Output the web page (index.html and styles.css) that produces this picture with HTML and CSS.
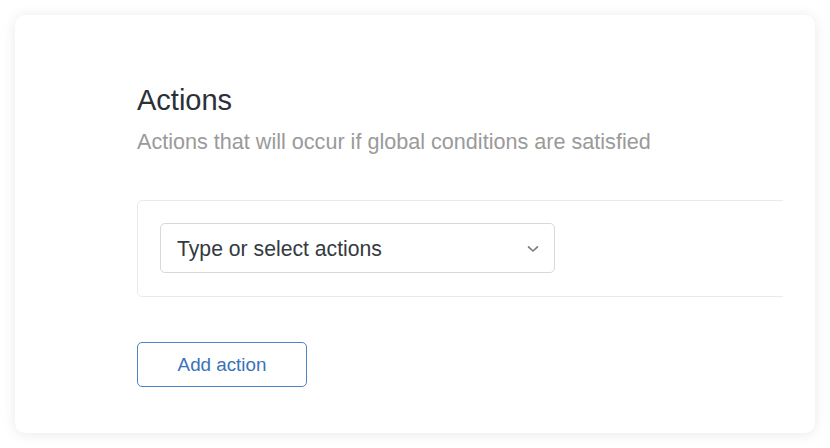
FILE: index.html
```html
<!DOCTYPE html>
<html>
<head>
<meta charset="utf-8">
<link rel="stylesheet" href="styles.css">
</head>
<body>
<div class="card">
  <h2 class="title">Actions</h2>
  <p class="subtitle">Actions that will occur if global conditions are satisfied</p>
  <div class="clip">
    <div class="panel">
      <div class="select">
        <span class="placeholder">Type or select actions</span>
        <svg class="chev" width="12" height="8" viewBox="0 0 12 8"><path d="M1.5 1.8 L6 6 L10.5 1.8" fill="none" stroke="#7a7a7a" stroke-width="1.6" stroke-linecap="round" stroke-linejoin="round"/></svg>
      </div>
    </div>
  </div>
  <button class="add">Add action</button>
</div>
</body>
</html>
```
FILE: styles.css
```css
html, body {
  margin: 0;
  background: #ffffff;
}
body {
  padding: 15px;
  font-family: "Liberation Sans", Arial, sans-serif;
}
.card {
  background: #fff;
  border-radius: 10px;
  box-shadow: 0 1px 14px rgba(0, 0, 0, 0.09);
  height: 418px;
  box-sizing: border-box;
  padding: 68px 32px 0 122px;
}
.title {
  margin: 0;
  font-size: 29px;
  line-height: 35px;
  font-weight: 400;
  color: #2b3137;
}
.subtitle {
  margin: 11px 0 0;
  font-size: 21.6px;
  line-height: 26px;
  color: #9a9a9a;
}
.clip {
  margin-top: 45px;
  overflow: hidden;
}
.panel {
  width: calc(100% + 20px);
  box-sizing: border-box;
  height: 97px;
  border: 1px solid #eaeaea;
  border-radius: 5px;
  padding: 22px 22px;
}
.select {
  width: 395px;
  height: 50px;
  box-sizing: border-box;
  border: 1px solid #d8d8d8;
  border-radius: 5px;
  display: flex;
  align-items: center;
  justify-content: space-between;
  padding: 2px 15px 0 16px;
}
.placeholder {
  font-size: 21.2px;
  color: #343a40;
}
.chev {
  display: block;
}
.add {
  margin-top: 45px;
  width: 170px;
  height: 45px;
  background: #fff;
  border: 1px solid #4d82c6;
  border-radius: 5px;
  color: #3a72b8;
  font-family: "Liberation Sans", Arial, sans-serif;
  font-size: 18.8px;
  padding: 1px 0 0;
}
```
